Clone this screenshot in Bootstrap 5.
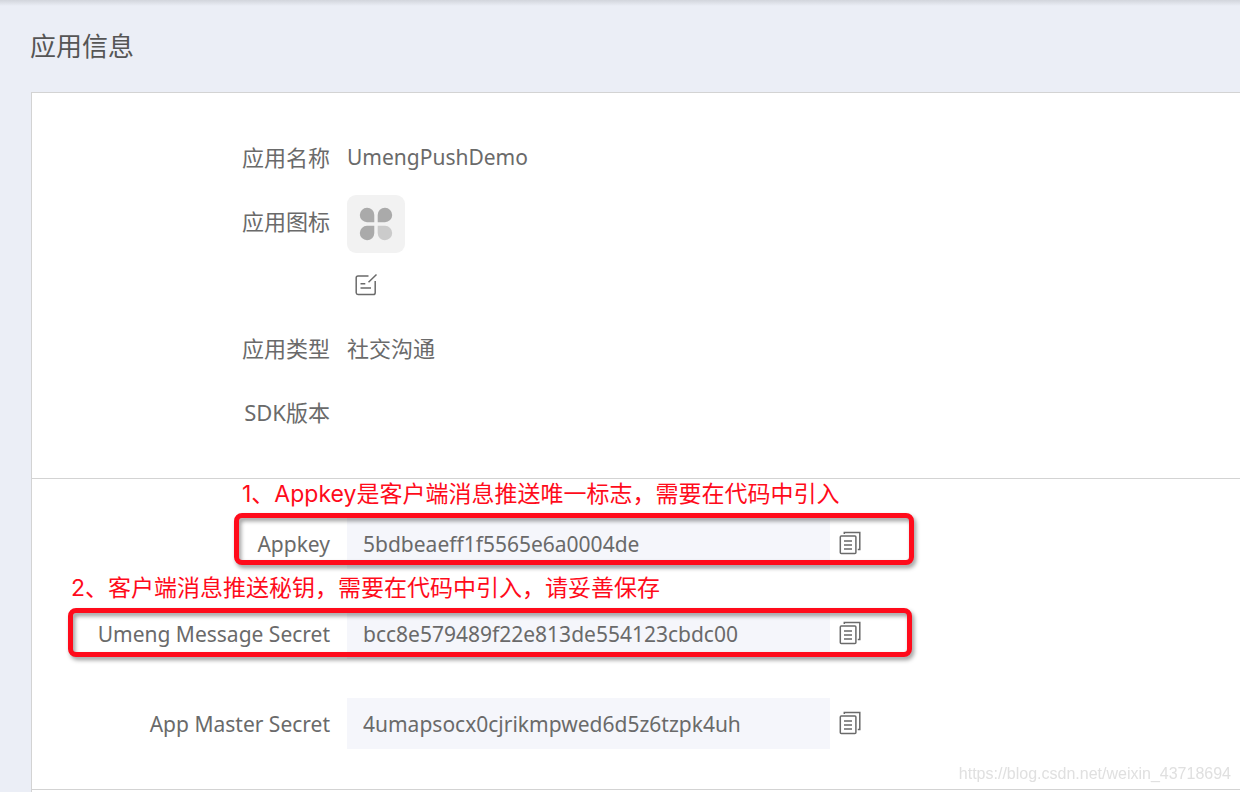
<!DOCTYPE html>
<html lang="zh-CN">
<head>
<meta charset="utf-8">
<meta name="viewport" content="width=device-width, initial-scale=1">
<title>应用信息</title>
<link href="https://cdn.jsdelivr.net/npm/bootstrap@5.3.0/dist/css/bootstrap.min.css" rel="stylesheet">
<style>
  body {
    background: #ebeef6 linear-gradient(#d2d5dc, #ebeef6) no-repeat 0 0 / 100% 6px;
    color: #6a6a6a;
    font-family: "Noto Sans", "Noto Sans CJK SC", sans-serif;
    font-size: 22px;
    line-height: 32px;
  }
  .page-title { font-size: 26px; line-height: 40px; font-weight: 400; color: #555; padding: 26px 0 26px 30px; }
  .info-panel { margin-left: 31px; background: #fff; border-left: 1px solid #d3d3d3; border-top: 1px solid #d3d3d3; }
  .info-section { border-bottom: 1px solid #d3d3d3; }
  .basics { padding: 48px 0 50px; gap: 32px; }
  .keys { padding: 39px 0 40px; gap: 39px; }
  .latin, .keys { font-size: 21px; }
  .field-name { width: 298px; margin-right: 17px; text-align: right; flex: none; }
  .app-tile { width: 58px; height: 58px; border-radius: 9px; background: #f2f2f2; margin: -10px 0 -16px; }
  .edit-row { height: 31px; }
  .key-box {
    width: 483px; height: 51px; border: 0; border-radius: 0; padding: 0 16px;
    background: #f5f6fb; color: #6a6a6a; outline: 0;
  }
  .bare-btn { border: 0; background: none; padding: 0; color: #6a6a6a; line-height: 0; }
  .copy-btn { margin: 0 0 2px 8px; }
  .edit-btn { margin-left: 7px; }
  .callout { color: #ff0b1b; font-family: Inter, "Noto Sans CJK SC", sans-serif; font-size: 23px; white-space: nowrap; }
  .callout-a { left: 210px; top: -40px; }
  .callout-b { left: 39px; top: -36px; }
  .frame { border: 5px solid #ff0b1b; border-radius: 8px; filter: drop-shadow(2px 3px 2px rgba(0,0,0,.4)); pointer-events: none; }
  .frame-a { left: 202px; top: -5px; width: 680px; height: 52px; }
  .frame-b { left: 36px; top: 0; width: 844px; height: 49px; }
  .site-mark { right: 9px; bottom: 2px; font: 16px/32px "Liberation Sans", Arial, sans-serif; color: #e0e0e0; }
</style>
</head>
<body class="d-flex flex-column min-vh-100 overflow-hidden">
<svg class="d-none" aria-hidden="true">
  <symbol id="copy" viewBox="0 0 24 24" fill="none" stroke="currentColor" stroke-width="1.5">
    <rect x="2.3" y="5" width="15.6" height="17.6" rx="1"/>
    <path d="M6 10h8M6 14h8M6 18h8M6.3 3V1.4h15.5v17.2h-2"/>
  </symbol>
</svg>
<h1 class="page-title m-0">应用信息</h1>
<main class="info-panel flex-grow-1">
  <section class="info-section basics d-flex flex-column">
    <div class="d-flex"><span class="field-name">应用名称</span><span class="latin">UmengPushDemo</span></div>
    <div class="d-flex">
      <span class="field-name">应用图标</span>
      <div>
        <div class="app-tile d-flex align-items-center justify-content-center">
          <svg width="34" height="34" viewBox="0 0 34 34" fill="#aaa" role="img" aria-label="应用图标">
            <path d="M8 .8a7.2 7.2 0 1 0 0 14.4h7.3V8A7.2 7.2 0 0 0 8 .8z"/>
            <path d="M26 .8a7.2 7.2 0 1 1 0 14.4h-7.3V8A7.2 7.2 0 0 1 26 .8z"/>
            <path d="M8 33.2a7.2 7.2 0 1 1 0-14.4h7.3V26A7.2 7.2 0 0 1 8 33.2z"/>
            <path fill="#cbcbcb" d="M26 33.2a7.2 7.2 0 1 0 0-14.4h-7.3V26a7.2 7.2 0 0 0 7.3 7.2z"/>
          </svg>
        </div>
      </div>
    </div>
    <div class="edit-row d-flex"><span class="field-name"></span>
      <button type="button" class="bare-btn edit-btn" aria-label="编辑">
        <svg width="24" height="24" viewBox="0 0 24 24" fill="none" stroke="currentColor" stroke-width="1.5">
          <path d="M14.5 3H4a1.8 1.8 0 0 0-1.8 1.8v15A1.8 1.8 0 0 0 4 21.5h15.4a1.8 1.8 0 0 0 1.8-1.8V8M22.5 1.5l-8 7.8M6.5 10.7h4.8M6.5 15h10.5"/>
        </svg>
      </button>
    </div>
    <div class="d-flex"><span class="field-name">应用类型</span><span>社交沟通</span></div>
    <div class="d-flex"><span class="field-name">SDK版本</span><span></span></div>
  </section>
  <section class="info-section keys d-flex flex-column">
    <div class="d-flex align-items-center position-relative">
      <label class="field-name" for="appkey">Appkey</label>
      <input class="key-box" id="appkey" type="text" readonly value="5bdbeaeff1f5565e6a0004de">
      <button type="button" class="bare-btn copy-btn" aria-label="复制"><svg width="24" height="24"><use href="#copy"/></svg></button>
      <span class="callout callout-a position-absolute">1、Appkey是客户端消息推送唯一标志，需要在代码中引入</span>
      <div class="frame frame-a position-absolute"></div>
    </div>
    <div class="d-flex align-items-center position-relative">
      <label class="field-name" for="message-secret">Umeng Message Secret</label>
      <input class="key-box" id="message-secret" type="text" readonly value="bcc8e579489f22e813de554123cbdc00">
      <button type="button" class="bare-btn copy-btn" aria-label="复制"><svg width="24" height="24"><use href="#copy"/></svg></button>
      <span class="callout callout-b position-absolute">2、客户端消息推送秘钥，需要在代码中引入，请妥善保存</span>
      <div class="frame frame-b position-absolute"></div>
    </div>
    <div class="d-flex align-items-center">
      <label class="field-name" for="master-secret">App Master Secret</label>
      <input class="key-box" id="master-secret" type="text" readonly value="4umapsocx0cjrikmpwed6d5z6tzpk4uh">
      <button type="button" class="bare-btn copy-btn" aria-label="复制"><svg width="24" height="24"><use href="#copy"/></svg></button>
    </div>
  </section>
</main>
<span class="site-mark position-fixed">https://blog.csdn.net/weixin_43718694</span>
<script src="https://cdn.jsdelivr.net/npm/bootstrap@5.3.0/dist/js/bootstrap.bundle.min.js"></script>
</body>
</html>
